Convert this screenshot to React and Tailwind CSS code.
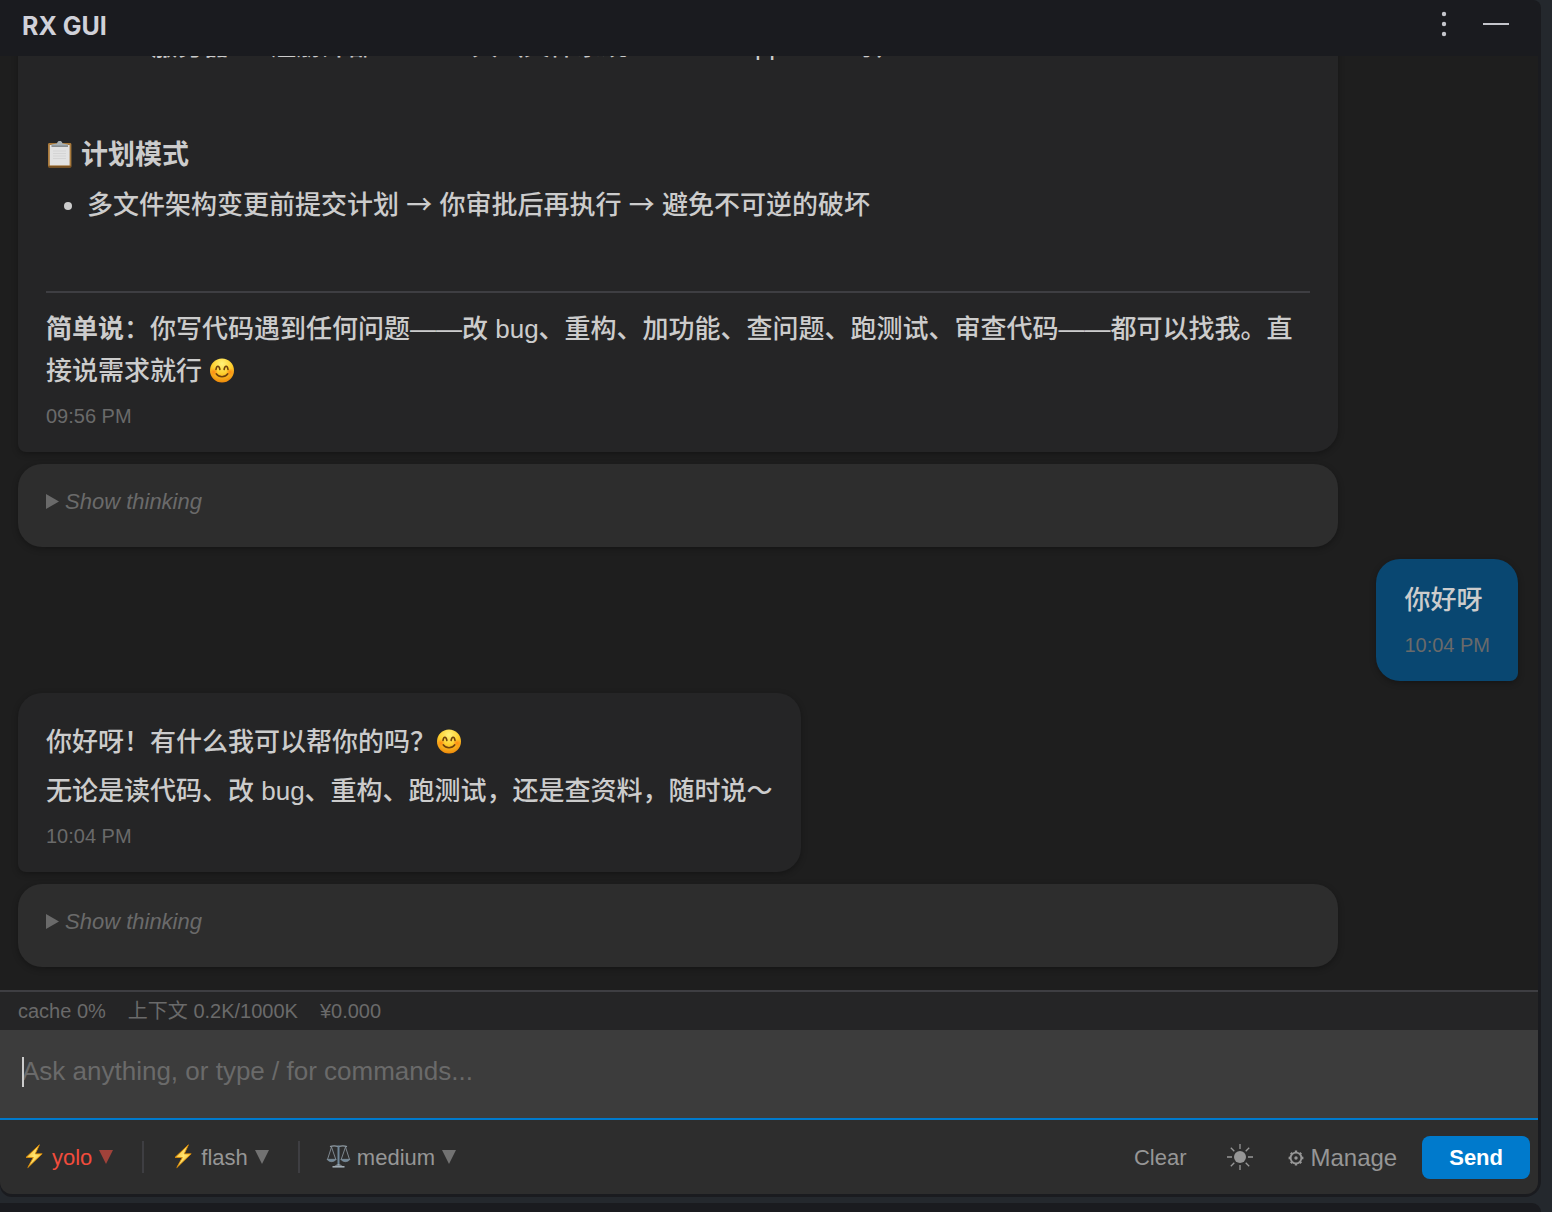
import { useState } from 'react';

const textFont = 'font-["Liberation_Sans","Noto_Sans_CJK_SC",sans-serif]';

const SmileIcon = () => (
    <svg viewBox="0 0 26 26" className="inline-block w-[26px] h-[26px] align-[-4px]" role="img" aria-label="smile">
        <defs>
            <radialGradient id="face" cx="50%" cy="22%" r="80%">
                <stop offset="0%" stopColor="#fff27a" />
                <stop offset="50%" stopColor="#fdd02f" />
                <stop offset="100%" stopColor="#ee8507" />
            </radialGradient>
            <radialGradient id="cheek">
                <stop offset="0%" stopColor="#ff7a0c" stopOpacity="0.8" />
                <stop offset="100%" stopColor="#ff7a0c" stopOpacity="0" />
            </radialGradient>
        </defs>
        <circle cx="13" cy="12.500" r="12" fill="url(#face)" />
        <circle cx="5" cy="14" r="4" fill="url(#cheek)" />
        <circle cx="21" cy="14" r="4" fill="url(#cheek)" />
        <path d="M7 11.500C7.500 7.200 10.200 7.200 10.900 11.500M15.100 11.500C15.800 7.200 18.500 7.200 19 11.500" fill="none" stroke="#70420c" strokeWidth="1.600" strokeLinecap="round" />
        <path d="M7.200 15.800C10 19.800 16 19.800 18.800 15.800" fill="none" stroke="#70420c" strokeWidth="1.500" strokeLinecap="round" />
    </svg>
);

const ClipboardIcon = () => (
    <svg viewBox="0 0 27 28" className="w-[27px] h-[28px]" aria-hidden="true">
        <rect x="2" y="2" width="23.400" height="24.500" rx="1.400" fill="#a97a3c" />
        <rect x="2" y="24.700" width="23.400" height="1.800" rx="0.800" fill="#7c5220" />
        <rect x="3.800" y="4" width="19.800" height="20.400" fill="#e2e2e2" />
        <path d="M7 10h13M7 12.500h13M7 15h13M7 17.500h13" stroke="#d4d4d4" strokeWidth="1" />
        <path d="M5.500 5.200V3.400L11 2.400C11.500 0.600 12.300 0 13.700 0S16 0.600 16.500 2.400L22 3.400V5.200Z" fill="#a7b0b4" />
        <path d="M5.500 5.200H22" stroke="#686d72" strokeWidth="1" />
    </svg>
);

const BoltIcon = () => (
    <svg viewBox="0 0 26 26" className="w-[26px] h-[26px]" aria-hidden="true">
        <defs>
            <linearGradient id="bolt" x1="0" y1="0" x2="1" y2="1">
                <stop offset="0%" stopColor="#f5a30c" />
                <stop offset="50%" stopColor="#ffe873" />
                <stop offset="100%" stopColor="#f5a30c" />
            </linearGradient>
        </defs>
        <path d="M19.400 0.800L6 13.400L13.300 13.500L7.800 23.600L22.200 9.800L15.200 9.900Z" fill="url(#bolt)" stroke="#dd8c06" strokeWidth="0.900" strokeLinejoin="round" />
    </svg>
);

const ScalesIcon = () => (
    <svg viewBox="0 0 26 26" className="w-[26px] h-[26px]" fill="none" aria-hidden="true">
        <path d="M5 2.700Q9 1.200 13.500 2.700Q18 1.200 22 2.700" stroke="#8f9aa2" strokeWidth="1.300" />
        <path d="M13.500 1.500V21.500" stroke="#6f8698" strokeWidth="2" />
        <path d="M6.500 3L2.500 15.500M6.500 3L10.800 15.500M20.500 3L16.200 15.500M20.500 3L24.500 15.500" stroke="#87919a" strokeWidth="0.900" />
        <path d="M2 15.300H11.200Q10 17.700 6.600 17.700T2 15.300ZM15.800 15.300H25Q23.800 17.700 20.400 17.700T15.800 15.300Z" fill="#71899c" stroke="#8b9aa5" strokeWidth="0.600" />
        <path d="M9.500 21.500Q13.500 19.300 17.500 21.500Z" fill="#bccad4" />
        <path d="M7.500 22.800H19.500" stroke="#a8b4bd" strokeWidth="1.500" />
    </svg>
);

const SunIcon = () => (
    <svg viewBox="0 0 26 26" className="w-[26px] h-[26px]" aria-hidden="true">
        <circle cx="13" cy="13" r="6" fill="currentColor" />
        <path d="M13 0V5M13 21V26M0 13H5M21 13H26M3.800 3.800L7.300 7.300M18.700 18.700L22.200 22.200M22.200 3.800L18.700 7.300M7.300 18.700L3.800 22.200" stroke="currentColor" strokeWidth="1.300" />
    </svg>
);

const GearIcon = () => (
    <svg viewBox="0 0 16 16" className="w-[16px] h-[16px]" fill="none" stroke="currentColor" aria-hidden="true">
        <circle cx="8" cy="8" r="5.400" strokeWidth="1.900" />
        <circle cx="8" cy="8" r="1.700" fill="currentColor" stroke="none" />
        <path d="M8 0.600V2.500M8 13.500V15.400M0.600 8H2.500M13.500 8H15.400M2.800 2.800L4.100 4.100M11.900 11.900L13.200 13.200M13.200 2.800L11.900 4.100M4.100 11.900L2.800 13.200" strokeWidth="2.400" />
    </svg>
);

// The Chinese font has the long arrow; leading-none keeps the row height
const Arrow = () => <span className='font-["Noto_Sans_CJK_SC",sans-serif] leading-none'>→</span>;

const Time = ({ children }) => (
    <div className="mt-2 text-[20px] leading-[32px] font-normal text-[#6a6a6a]">{children}</div>
);

const Thinking = () => (
    <details className="w-[88%] shrink-0 rounded-3xl bg-[#2d2d2d] px-7 pt-5 pb-7 shadow-[0_2px_6px_rgba(0,0,0,0.3)]">
        <summary className="flex items-center gap-[6px] list-none cursor-pointer text-[22px] leading-[35px] font-normal italic text-[#6a6a6a]">
            <svg viewBox="0 0 13 15" className="w-[13px] h-[15px]" aria-hidden="true">
                <path d="M0 0L13 7.500L0 15Z" fill="currentColor" />
            </svg>
            Show thinking
        </summary>
    </details>
);

const Picker = ({ label, icon, value, options, onChange, color, arrow }) => (
    <label className="flex items-center">
        {icon}
        <select
            aria-label={label}
            value={value}
            onChange={(e) => onChange(e.target.value)}
            className={`appearance-none field-sizing-content bg-transparent ml-[6px] mr-[7px] pt-[2px] text-[22px] leading-[32px] outline-none ${color}`}
        >
            {options.map(option => (
                <option key={option} value={option}>{option}</option>
            ))}
        </select>
        <svg viewBox="0 0 14 14" className={`w-[14px] h-[14px] ${arrow}`} aria-hidden="true">
            <path d="M0 0H14L7 14Z" fill="currentColor" />
        </svg>
    </label>
);

const Divider = () => <div className="w-[2px] h-8 ml-[29px] mr-[25px] bg-[#3e3e42]" />;

const App = () => {
    const [mode, setMode] = useState('yolo');
    const [model, setModel] = useState('flash');
    const [effort, setEffort] = useState('medium');
    const [draft, setDraft] = useState('');

    return (
        <div className={`h-screen flex flex-col gap-[6px] overflow-hidden bg-[#24282d] pr-[11px] text-[#cccccc] ${textFont}`}>
            <div className="flex-1 min-h-0 flex flex-col rounded-tr-lg rounded-br-2xl rounded-bl-xl bg-[#1a1b1f] pb-[3px]">
                <header className="h-14 shrink-0 flex items-center justify-between pl-[22px] pr-[32px] pb-[6px]">
                    <h1 className='pt-[2px] font-["Inter",sans-serif] text-[25px] leading-[36px] font-bold text-[#d0d1d9]'>RX GUI</h1>
                    <div className="flex items-center gap-[36px] pb-[2px] text-[#c4c5cb]">
                        <button aria-label="More">
                            <svg viewBox="0 0 6 26" className="w-[6px] h-[26px]" fill="currentColor" aria-hidden="true">
                                <circle cx="3" cy="3" r="2.200" />
                                <circle cx="3" cy="13" r="2.200" />
                                <circle cx="3" cy="23" r="2.200" />
                            </svg>
                        </button>
                        <button aria-label="Minimize" className="h-[26px] flex items-center">
                            <span className="w-[26px] h-[2px] bg-[#c4c5cb]" />
                        </button>
                    </div>
                </header>

                <div className="flex-1 min-h-0 flex flex-col mr-[3px] overflow-hidden rounded-b-xl bg-[#1e1e1e]">
                    {/* Messages, pinned to the newest one */}
                    <main className="flex-1 min-h-0 flex flex-col justify-end items-start gap-3 overflow-hidden pl-[18px] pr-5 pb-[23px] text-[26px] leading-[42px] font-medium">
                        <article className="w-[88%] shrink-0 rounded-3xl rounded-bl-lg bg-[#252526] px-7 py-5 shadow-[0_2px_6px_rgba(0,0,0,0.3)]">
                            <ul className="list-disc pl-[41px]">
                                <li><strong>MCP 服务器</strong> — 注册外部 MCP 工具（文件系统/GitHub/Puppeteer 等）</li>
                            </ul>
                            <h3 className="mt-[67px] flex items-center gap-2 text-[27px] font-bold">
                                <ClipboardIcon />
                                计划模式
                            </h3>
                            <ul className="mt-2 list-disc pl-[41px]">
                                <li>多文件架构变更前提交计划 <Arrow /> 你审批后再执行 <Arrow /> 避免不可逆的破坏</li>
                            </ul>
                            <hr className="mt-[65px] mb-[15px] border-t-2 border-[#3e3e42]" />
                            <p>
                                <strong>简单说</strong>：你写代码遇到任何问题——改 bug、重构、加功能、查问题、跑测试、审查代码——都可以找我。直接说需求就行 <SmileIcon />
                            </p>
                            <Time>09:56 PM</Time>
                        </article>

                        <Thinking />

                        <article className="shrink-0 self-end rounded-3xl rounded-br-lg bg-[#094771] px-7 py-5 shadow-[0_2px_6px_rgba(0,0,0,0.3)]">
                            <p>你好呀</p>
                            <Time>10:04 PM</Time>
                        </article>

                        <article className="shrink-0 rounded-3xl rounded-bl-lg bg-[#252526] px-7 pt-7 pb-5 shadow-[0_2px_6px_rgba(0,0,0,0.3)]">
                            <p>你好呀！有什么我可以帮你的吗？<SmileIcon /></p>
                            <p className="mt-[7px]">无论是读代码、改 bug、重构、跑测试，还是查资料，随时说～</p>
                            <Time>10:04 PM</Time>
                        </article>

                        <Thinking />
                    </main>

                    <div className="h-10 shrink-0 flex items-center gap-[22px] border-t-2 border-[#3e3e42] bg-[#252526] px-[18px] text-[20px] text-[#6a6a6a]">
                        <span>cache 0%</span>
                        <span>上下文 0.2K/1000K</span>
                        <span>¥0.000</span>
                    </div>

                    <div className="relative shrink-0 flex border-b-2 border-[#007acc] bg-[#3c3c3c]">
                        <textarea
                            aria-label="Message"
                            rows={1}
                            placeholder="Ask anything, or type / for commands..."
                            value={draft}
                            onChange={(e) => setDraft(e.target.value)}
                            className="w-full h-[88px] resize-none bg-transparent px-[22px] pt-5 text-[26px] leading-[42px] placeholder:text-[#6a6a6a] outline-none"
                        />
                        {draft === '' && <span className="absolute left-[22px] top-[27px] w-[2px] h-[30px] bg-[#cccccc]" />}
                    </div>

                    <div className="h-[74px] shrink-0 flex items-center justify-between bg-[#2d2d2d] pl-5 pr-2 text-[#969696]">
                        <div className="flex items-center">
                            <Picker label="Mode" icon={<BoltIcon />} value={mode} onChange={setMode} options={['yolo', 'ask', 'plan']} color="text-[#f14c3c]" arrow="text-[#a0423a]" />
                            <Divider />
                            <Picker label="Model" icon={<BoltIcon />} value={model} onChange={setModel} options={['flash', 'pro']} color="text-[#969696]" arrow="text-[#727272]" />
                            <Divider />
                            <Picker label="Effort" icon={<ScalesIcon />} value={effort} onChange={setEffort} options={['low', 'medium', 'high']} color="text-[#969696]" arrow="text-[#727272]" />
                        </div>
                        <div className="flex items-center">
                            <button className="text-[22px] mr-[41px]">Clear</button>
                            <button aria-label="Theme" className="mr-[35px]"><SunIcon /></button>
                            <button className="flex items-center gap-[6px] mr-[25px] pt-[2px] text-[24px]">
                                <GearIcon />
                                Manage
                            </button>
                            <button className="h-[43px] px-[27px] rounded-lg bg-[#007acc] text-[22px] font-bold text-white">Send</button>
                        </div>
                    </div>
                </div>
            </div>
            <div className="h-[9px] shrink-0 rounded-tr-xl bg-[#1a1b1f]" />
        </div>
    );
};

export default App;
